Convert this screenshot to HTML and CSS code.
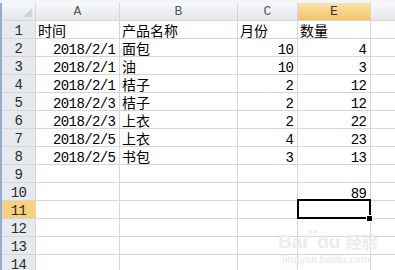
FILE: index.html
```html
<html lang="zh">
    <head>
        <meta charset="UTF-8">
        <title>Sheet1</title>
        <link rel="stylesheet" href="styles.css">
    </head>
    <body>
        <div class="topbar"></div>

        <div class="sheet">
            <div class="corner"><span class="tri"></span></div>
            <div class="colhead">A</div>
            <div class="colhead">B</div>
            <div class="colhead">C</div>
            <div class="colhead active">E</div>
            <div class="colhead"></div>

            <div class="rowhead">1</div>
            <div class="cell zh">时间</div>
            <div class="cell zh">产品名称</div>
            <div class="cell zh">月份</div>
            <div class="cell zh">数量</div>
            <div class="cell"></div>

            <div class="rowhead">2</div>
            <div class="cell num">2018/2/1</div>
            <div class="cell zh">面包</div>
            <div class="cell num">10</div>
            <div class="cell num">4</div>
            <div class="cell"></div>

            <div class="rowhead">3</div>
            <div class="cell num">2018/2/1</div>
            <div class="cell zh">油</div>
            <div class="cell num">10</div>
            <div class="cell num">3</div>
            <div class="cell"></div>

            <div class="rowhead">4</div>
            <div class="cell num">2018/2/1</div>
            <div class="cell zh">桔子</div>
            <div class="cell num">2</div>
            <div class="cell num">12</div>
            <div class="cell"></div>

            <div class="rowhead">5</div>
            <div class="cell num">2018/2/3</div>
            <div class="cell zh">桔子</div>
            <div class="cell num">2</div>
            <div class="cell num">12</div>
            <div class="cell"></div>

            <div class="rowhead">6</div>
            <div class="cell num">2018/2/3</div>
            <div class="cell zh">上衣</div>
            <div class="cell num">2</div>
            <div class="cell num">22</div>
            <div class="cell"></div>

            <div class="rowhead">7</div>
            <div class="cell num">2018/2/5</div>
            <div class="cell zh">上衣</div>
            <div class="cell num">4</div>
            <div class="cell num">23</div>
            <div class="cell"></div>

            <div class="rowhead">8</div>
            <div class="cell num">2018/2/5</div>
            <div class="cell zh">书包</div>
            <div class="cell num">3</div>
            <div class="cell num">13</div>
            <div class="cell"></div>

            <div class="rowhead">9</div>
            <div class="cell"></div>
            <div class="cell"></div>
            <div class="cell"></div>
            <div class="cell"></div>
            <div class="cell"></div>

            <div class="rowhead">10</div>
            <div class="cell"></div>
            <div class="cell"></div>
            <div class="cell"></div>
            <div class="cell num">89</div>
            <div class="cell"></div>

            <div class="rowhead active">11</div>
            <div class="cell"></div>
            <div class="cell"></div>
            <div class="cell"></div>
            <div class="cell selected"><span class="handle"></span></div>
            <div class="cell"></div>

            <div class="rowhead">12</div>
            <div class="cell"></div>
            <div class="cell"></div>
            <div class="cell"></div>
            <div class="cell watermark-anchor">
                <div class="watermark">
                    <div class="wm-logo">Bai<span class="paw">●●</span>du <span class="wm-zh">经验</span></div>
                    <div class="wm-url">jingyan.baidu.com</div>
                </div>
            </div>
            <div class="cell"></div>

            <div class="rowhead">13</div>
            <div class="cell"></div>
            <div class="cell"></div>
            <div class="cell"></div>
            <div class="cell"></div>
            <div class="cell"></div>

            <div class="rowhead">14</div>
            <div class="cell"></div>
            <div class="cell"></div>
            <div class="cell"></div>
            <div class="cell"></div>
            <div class="cell"></div>
        </div>
    </body>
</html>
```

FILE: styles.css
```css
html, body{
    margin: 0;
    padding: 0;
    overflow: hidden;
    background: #fff;
}

.topbar{
    height: 3px;
    background: #f3f5f8;
}

.sheet{
    display: grid;
    grid-template-columns: 33px 83px 117px 59px 72px 1fr;
    grid-auto-rows: 17px;
    gap: 1px;
    background: #d6d6d6;
    border-left: 2px solid #97acc8;
}

.corner{
    background: linear-gradient(#f7f8fa, #e2e6eb);
    position: relative;
}

.tri{
    position: absolute;
    right: 3px;
    bottom: 3px;
    width: 0;
    height: 0;
    border-left: 9px solid transparent;
    border-bottom: 9px solid #cfd5dd;
}

.colhead{
    display: flex;
    align-items: center;
    justify-content: center;
    background: linear-gradient(#f8f9fb, #e4e7eb);
    color: #555;
    font-family: "Liberation Mono", monospace;
    font-size: 13px;
}

.colhead.active{
    background: linear-gradient(#fae3ae, #f2c463);
    color: #333;
}

.rowhead{
    display: flex;
    align-items: center;
    justify-content: center;
    padding-top: 2px;
    box-sizing: border-box;
    background: #e6e9ee;
    color: #2b2b2b;
    font-family: "Liberation Mono", monospace;
    font-size: 14px;
    letter-spacing: -0.6px;
}

.rowhead.active{
    background: #f7cf7e;
}

.cell{
    display: flex;
    align-items: flex-end;
    padding: 0 3px 0 2px;
    background: #fff;
    color: #000;
    white-space: nowrap;
}

.num{
    justify-content: flex-end;
    font-family: "Liberation Mono", monospace;
    font-size: 14px;
    letter-spacing: -0.6px;
    line-height: 12px;
    padding-right: 3.6px;
}

.zh{
    font-family: "Noto Sans CJK SC", sans-serif;
    font-size: 14px;
    line-height: 16px;
}

.selected{
    position: relative;
}

.selected::after{
    content: "";
    position: absolute;
    left: -1px;
    right: -1px;
    top: -2px;
    bottom: -1px;
    border: 2px solid #000;
    z-index: 2;
}

.handle{
    position: absolute;
    right: -3px;
    bottom: -4px;
    width: 5px;
    height: 5px;
    background: #000;
    border: 1px solid #fff;
    z-index: 3;
}

.watermark-anchor{
    position: relative;
}

.watermark{
    position: absolute;
    left: -20px;
    top: 8px;
    color: #ececec;
    font-family: "Liberation Sans", sans-serif;
    z-index: 1;
    pointer-events: none;
}

.wm-logo{
    font-size: 19px;
    font-weight: bold;
    white-space: nowrap;
}

.paw{
    font-size: 8px;
    vertical-align: 14px;
}

.wm-zh{
    font-family: "Noto Sans CJK SC", sans-serif;
    font-size: 16px;
}

.wm-url{
    font-size: 10px;
    font-weight: bold;
    padding-left: 4px;
    margin-top: 1px;
}
```
